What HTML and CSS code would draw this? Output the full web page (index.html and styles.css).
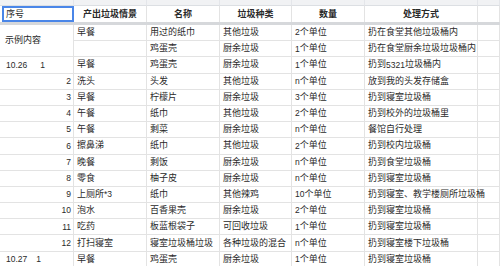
FILE: index.html
```html
<!DOCTYPE html>
<html>
<head>
<meta charset="utf-8">
<link rel="stylesheet" href="styles.css">
</head>
<body>
<div class="sheet">
  <div class="band"></div><div class="band"></div><div class="band"></div><div class="band"></div><div class="band"></div><div class="band"></div><div class="band"></div>

  <div class="c hd sel">序号</div>
  <div class="c hd b">产出垃圾情景</div>
  <div class="c hd b">名称</div>
  <div class="c hd b">垃圾种类</div>
  <div class="c hd b">数量</div>
  <div class="c hd b">处理方式</div>
  <div class="c hd"></div>

  <div class="divider"></div>

  <div class="c merge">示例内容</div>
  <div class="c">早餐</div><div class="c">用过的纸巾</div><div class="c">其他垃圾</div><div class="c"><span class="n">2</span>个单位</div><div class="c">扔在食堂其他垃圾桶内</div><div class="c"></div>
  <div class="c"></div><div class="c">鸡蛋壳</div><div class="c">厨余垃圾</div><div class="c"><span class="n">1</span>个单位</div><div class="c">扔在食堂厨余垃圾垃圾桶内</div><div class="c"></div>

  <div class="c date"><span class="n">10.26</span><span class="n idx">1</span></div><div class="c">早餐</div><div class="c">鸡蛋壳</div><div class="c">厨余垃圾</div><div class="c"><span class="n">1</span>个单位</div><div class="c">扔到<span class="n">5321</span>垃圾桶内</div><div class="c"></div>
  <div class="c r n">2</div><div class="c">洗头</div><div class="c">头发</div><div class="c">其他垃圾</div><div class="c"><span class="n">n</span>个单位</div><div class="c">放到我的头发存储盒</div><div class="c"></div>
  <div class="c r n">3</div><div class="c">早餐</div><div class="c">柠檬片</div><div class="c">厨余垃圾</div><div class="c"><span class="n">3</span>个单位</div><div class="c">扔到寝室垃圾桶</div><div class="c"></div>
  <div class="c r n">4</div><div class="c">午餐</div><div class="c">纸巾</div><div class="c">其他垃圾</div><div class="c"><span class="n">2</span>个单位</div><div class="c">扔到校外的垃圾桶里</div><div class="c"></div>
  <div class="c r n">5</div><div class="c">午餐</div><div class="c">剩菜</div><div class="c">厨余垃圾</div><div class="c"><span class="n">n</span>个单位</div><div class="c">餐馆自行处理</div><div class="c"></div>
  <div class="c r n">6</div><div class="c">擦鼻涕</div><div class="c">纸巾</div><div class="c">其他垃圾</div><div class="c"><span class="n">2</span>个单位</div><div class="c">扔到校内垃圾桶</div><div class="c"></div>
  <div class="c r n">7</div><div class="c">晚餐</div><div class="c">剩饭</div><div class="c">厨余垃圾</div><div class="c"><span class="n">n</span>个单位</div><div class="c">扔到食堂垃圾桶</div><div class="c"></div>
  <div class="c r n">8</div><div class="c">零食</div><div class="c">柚子皮</div><div class="c">厨余垃圾</div><div class="c"><span class="n">n</span>个单位</div><div class="c">扔到寝室垃圾桶</div><div class="c"></div>
  <div class="c r n">9</div><div class="c">上厕所<span class="n">*3</span></div><div class="c">纸巾</div><div class="c">其他辣鸡</div><div class="c"><span class="n">10</span>个单位</div><div class="c">扔到寝室、教学楼厕所垃圾桶</div><div class="c"></div>
  <div class="c r n">10</div><div class="c">泡水</div><div class="c">百香果壳</div><div class="c">厨余垃圾</div><div class="c"><span class="n">2</span>个单位</div><div class="c">扔到寝室垃圾桶</div><div class="c"></div>
  <div class="c r n">11</div><div class="c">吃药</div><div class="c">板蓝根袋子</div><div class="c">可回收垃圾</div><div class="c"><span class="n">1</span>个单位</div><div class="c">扔到寝室垃圾桶</div><div class="c"></div>
  <div class="c r n">12</div><div class="c">打扫寝室</div><div class="c">寝室垃圾桶垃圾</div><div class="c">各种垃圾的混合</div><div class="c"><span class="n">n</span>个单位</div><div class="c">扔到寝室楼下垃圾桶</div><div class="c"></div>
  <div class="c date"><span class="n">10.27</span><span class="n idx2">1</span></div><div class="c">早餐</div><div class="c">鸡蛋壳</div><div class="c">厨余垃圾</div><div class="c"><span class="n">1</span>个单位</div><div class="c">扔到寝室垃圾桶</div><div class="c"></div>
</div>
</body>
</html>
```

FILE: styles.css
```css
html, body {
  margin: 0;
  padding: 0;
  background: #ffffff;
  overflow: hidden;
}

.sheet {
  display: grid;
  grid-template-columns: 74px 73px 73px 72px 73px 113px 1fr;
  grid-template-rows: 6px 16px 3px repeat(15, 16.2px);
  width: 500px;
  height: 266px;
  overflow: hidden;
  font-family: "Liberation Sans", "Noto Sans CJK SC", sans-serif;
  font-size: 9px;
  color: #2a2a2a;
}

.band {
  background: #f1f2f4;
  border-right: 1px solid #e4e6ea;
  border-bottom: 1px solid #dcdfe3;
  box-sizing: border-box;
}

.c {
  box-sizing: border-box;
  border-right: 1px solid #e3e3e3;
  border-bottom: 1px solid #e3e3e3;
  padding: 0 3px;
  white-space: nowrap;
  overflow: visible;
  display: flex;
  align-items: center;
  line-height: 1;
}

.hd {
  justify-content: center;
  border-bottom: none;
}

.b {
  font-weight: bold;
}

.sel {
  justify-content: flex-start;
  border: 2px solid #4a86e8;
  margin-left: 2px;
  padding-left: 2px;
}

.divider {
  grid-column: 1 / -1;
  background: #d6d8db;
}

.merge {
  grid-row: span 2;
  padding-left: 5px;
}

.r {
  justify-content: flex-end;
  padding-right: 2px;
}

.date {
  padding-left: 6px;
}

.n {
  font-size: 8.5px;
}

.idx {
  margin-left: 13px;
}

.idx2 {
  margin-left: 9px;
}
```
